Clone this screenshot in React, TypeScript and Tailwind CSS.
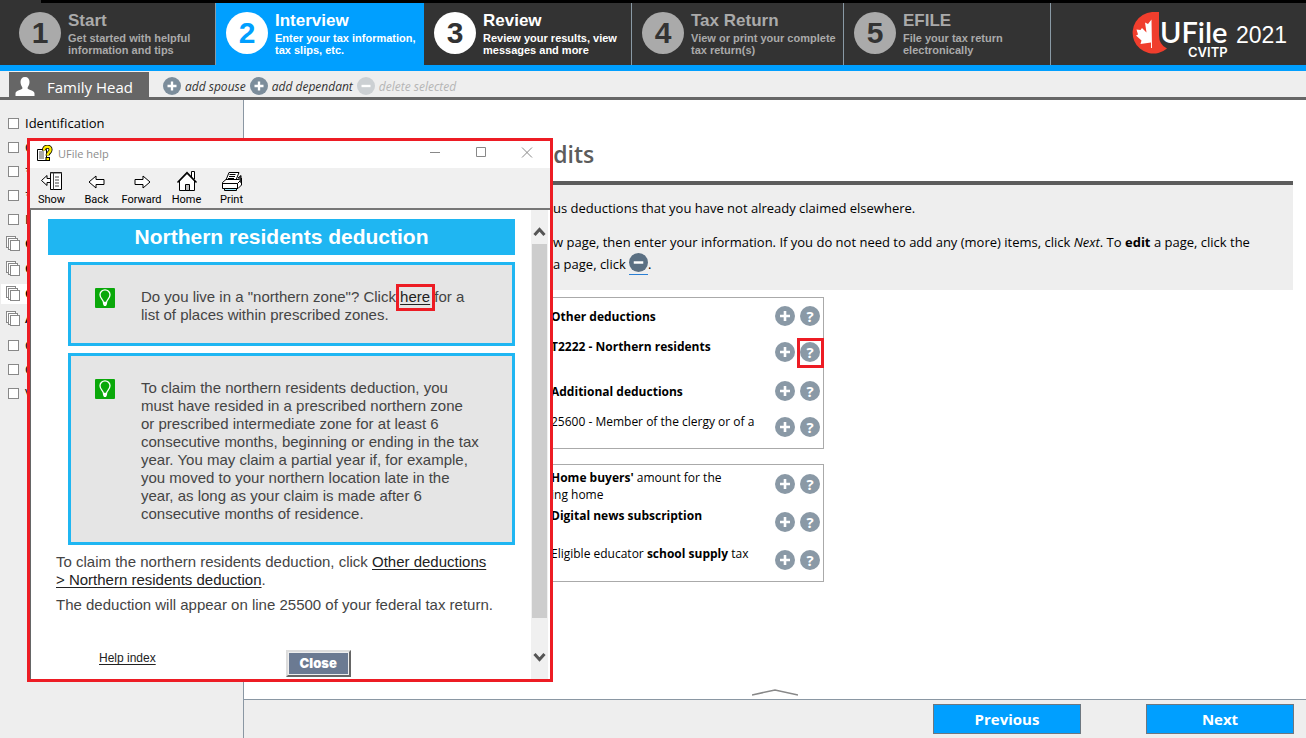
import type { ReactNode } from 'react';

const steps = [
  { n: 1, title: 'Start', lines: ['Get started with helpful', 'information and tips'], box: 'w-[215px] pl-[19px] bg-[#333] text-[#aaa]', circle: 'bg-[#aaa] text-[#333]' },
  { n: 2, title: 'Interview', lines: ['Enter your tax information,', 'tax slips, etc.'], box: 'w-[209px] pl-[10px] bg-[#009fff] text-white border-l border-[#8a9aa5]', circle: 'bg-white text-[#009fff]' },
  { n: 3, title: 'Review', lines: ['Review your results, view', 'messages and more'], box: 'w-[208px] pl-[10px] bg-[#333] text-white border-r border-[#8a9aa5]', circle: 'bg-white text-[#333]' },
  { n: 4, title: 'Tax Return', lines: ['View or print your complete', 'tax return(s)'], box: 'w-[212px] pl-[10px] bg-[#333] text-[#aaa] border-r border-[#8a9aa5]', circle: 'bg-[#aaa] text-[#333]' },
  { n: 5, title: 'EFILE', lines: ['File your tax return', 'electronically'], box: 'w-[207px] pl-[10px] bg-[#333] text-[#aaa] border-r border-[#8a9aa5]', circle: 'bg-[#aaa] text-[#333]' },
];

function Logo() {
  return (
    <svg width="158" height="52" viewBox="0 0 158 52" role="img" aria-label="UFile CVITP 2021">
      <path d="M28 3 H21 A20.800 20.800 0 1 0 36 39.500 Q28 36 28 26 Z" fill="#f03e2d" />
      <path d="M20 39 L20 33.500 L9.500 35 L10.500 31.500 L5 26.500 L7 25.500 L5.500 20.500 L9.500 21 L11 19 L15.500 23.500 L14 13.500 L17 15 L20.500 10.500 L21 39 Z" fill="#fff" />
      <text x="29" y="34" fill="#fff" fontFamily="Lato, sans-serif" fontSize="29" fontWeight="600">UFile</text>
      <text x="57" y="48" fill="#fff" fontFamily="Inter, sans-serif" fontSize="13" fontWeight="600">CVITP</text>
      <text x="105" y="34" fill="#fff" fontFamily="Liberation Sans, sans-serif" fontSize="23" fontWeight="400">2021</text>
    </svg>
  );
}

function Disc({ minus, className }: { minus?: boolean; className: string }) {
  return (
    <svg viewBox="0 0 20 20" className={className} aria-hidden="true">
      <circle cx="10" cy="10" r="10" fill="currentColor" />
      <path d={minus ? 'M5 10H15' : 'M5 10H15M10 5V15'} stroke="#fff" strokeWidth="2.600" />
    </svg>
  );
}

function Stack() {
  return (
    <svg width="15" height="16" viewBox="0 0 15 16" fill="#fff" stroke="#888" shapeRendering="crispEdges" aria-hidden="true">
      <rect x="0.500" y="0.500" width="9" height="11" />
      <rect x="2.500" y="2.500" width="9" height="11" />
      <rect x="4.500" y="4.500" width="9" height="10" />
    </svg>
  );
}

function CheckRow({ id, label }: { id: string; label: string }) {
  return (
    <div className="flex h-6 items-center pl-2">
      <input id={id} type="checkbox" className="size-[11px] appearance-none border border-[#888] bg-white" />
      <label htmlFor={id} className="pl-[6px]">{label}</label>
    </div>
  );
}

function StackRow({ label, active }: { label: string; active?: boolean }) {
  return (
    <div className="flex h-[25px] items-center">
      <button type="button" className={active ? 'ml-px flex h-5 flex-1 items-center gap-1 bg-white pl-[5px]' : 'ml-px flex h-5 flex-1 items-center gap-1 pl-[5px]'}>
        <Stack />
        {label}
      </button>
    </div>
  );
}

function Item({ children, tall, marked, top, name }: { children: ReactNode; tall?: boolean; marked?: boolean; top?: boolean; name: string }) {
  return (
    <div className={tall ? 'flex h-[38px] items-center' : 'flex h-9 items-center'}>
      <div className={top ? 'flex-1 self-start pt-1 pl-[290px]' : 'flex-1 pl-[290px]'}>{children}</div>
      <div className="flex gap-[5px] pr-[3px]">
        <button type="button" aria-label={'Add ' + name} className="size-5 text-[#8a99a6]"><Disc className="size-5" /></button>
        <div className="relative size-5">
          <button type="button" aria-label={'Help on ' + name} className="flex size-5 items-center justify-center rounded-full bg-[#8a99a6] text-[15px] leading-5 font-bold text-white">?</button>
          {marked && <span className="pointer-events-none absolute -top-1 -left-[3px] h-[30px] w-[27px] border-3 border-[#ed1c24]" />}
        </div>
      </div>
    </div>
  );
}

function ToolButton({ label, children }: { label: string; children: ReactNode }) {
  return (
    <button type="button" className="flex w-[45px] flex-col items-center gap-px font-[Roboto,sans-serif] text-[11px] leading-[14px] text-black">
      <svg width="24" height="22" viewBox="0 0 24 22" fill="#fff" stroke="#000" aria-hidden="true">{children}</svg>
      {label}
    </button>
  );
}

function Bulb() {
  return (
    <svg width="20" height="20" viewBox="0 0 20 20" className="shrink-0" aria-hidden="true">
      <rect width="20" height="20" rx="1" fill="#0aa80a" />
      <path d="M8.500 14.500 C8.500 12 5 10.500 5 6.800 A5 5 0 0 1 15 6.800 C15 10.500 11.500 12 11.500 14.500 Z" fill="none" stroke="#fff" strokeWidth="1.300" />
      <path d="M8 14.500h4v1.500l-1 2h-2l-1-2z" fill="#fff" />
    </svg>
  );
}

function HelpWindow() {
  return (
    <section role="dialog" aria-label="UFile help" className="absolute top-[138px] left-[27px] flex h-[544px] w-[526px] flex-col border-3 border-[#ed1c24] bg-white font-['Liberation_Sans',sans-serif] text-[#444]">
      <div className="flex h-[27px] shrink-0 items-center pb-[3px] pl-[7px] font-['Open_Sans',sans-serif] text-[11px] text-[#8c8c8c]">
        <svg width="16" height="17" viewBox="0 0 16 17" aria-hidden="true">
          <path d="M.5 4.500h9v11h-9z" fill="#fff" stroke="#000" />
          <path d="M2 7h5M2 9h5M2 11h5M2 13h5" stroke="#555" />
          <path d="M7 5.500C6.500.5 14 .5 13.500 5C13.500 7.500 10.500 7.500 10.500 10.500" fill="none" stroke="#000" strokeWidth="4" />
          <path d="M7 5.500C6.500.5 14 .5 13.500 5C13.500 7.500 10.500 7.500 10.500 10.500" fill="none" stroke="#ffee00" strokeWidth="2.400" />
          <rect x="9" y="12.500" width="3.500" height="3" fill="#ffee00" stroke="#000" />
        </svg>
        <span className="flex-1 pl-[5px]">UFile help</span>
        <div className="flex gap-[34px] pr-[17px]">
          <button type="button" aria-label="Minimize"><svg width="12" height="12" viewBox="0 0 12 12" stroke="#888"><path d="M1 5.500H11" /></svg></button>
          <button type="button" aria-label="Maximize"><svg width="12" height="12" viewBox="0 0 12 12" fill="none" stroke="#888"><path d="M1.500 .5h9v9h-9z" /></svg></button>
          <button type="button" aria-label="Close window"><svg width="12" height="12" viewBox="0 0 12 12" stroke="#888"><path d="M1 .5L11 10.500M11 .5L1 10.500" /></svg></button>
        </div>
      </div>
      <div className="flex h-[42px] shrink-0 items-start border-b-2 border-[#777] bg-[#f0f0f0] pt-[2px]">
        <div className="-ml-px flex">
          <ToolButton label="Show">
            <path d="M1.500 10.500L7 5.500V8.500H11V12.500H7V15.500Z" />
            <path d="M10.500 2.500h11v17h-11z" />
            <path d="M13.500 2.500v17M15 7h4M15 10h4M15 13h4M15 16h4M10 3h12" stroke="#444" />
          </ToolButton>
          <ToolButton label="Back"><path d="M4 12L11 6V9.500H19V14.500H11V18Z" /></ToolButton>
          <ToolButton label="Forward"><path d="M20 12L13 6V9.500H5V14.500H13V18Z" /></ToolButton>
          <ToolButton label="Home">
            <path d="M16.500 7V1.500h3V9" />
            <path d="M4.500 11V20.500h15V11L12 3.500Z" />
            <path d="M2.500 12.500L12 2.500L21.500 12.500" fill="none" strokeWidth="1.500" />
            <path d="M10.500 20.500v-6h4v6z" fill="#bbb" />
          </ToolButton>
          <ToolButton label="Print">
            <path d="M6 10L9 2.500H19L16 10Z" />
            <path d="M9.500 4.500h6M9 6.500h6M8 8.500h6" />
            <path d="M2.500 12.500L6 9.500H20L21.500 8V15L18 18.500H2.500Z" />
            <path d="M2.500 13.500H17.500V18.500M17.500 13.500L21 10" fill="none" />
            <path d="M4.500 18.500h12v2h-12z" fill="#aef" />
            <path d="M18 8L21 5.500V13" fill="#555" />
          </ToolButton>
        </div>
      </div>
      <div className="flex min-h-0 flex-1 border-l border-[#666]">
        <div className="flex-1 pt-[9px] pr-4 pl-[17px] text-[15px] leading-[18px]">
          <h2 className="flex h-9 items-center justify-center bg-[#1fb6f2] text-[21px] leading-6 font-bold text-white">Northern residents deduction</h2>
          <div className="mt-[7px] ml-5 flex h-[84px] gap-[26px] border-3 border-[#1fb6f2] bg-[#e5e5e5] pt-[23px] pl-6">
            <Bulb />
            <p className="whitespace-nowrap">
              Do you live in a "northern zone"? Click <a href="#zones" className="relative text-[#222] underline underline-offset-2">here<span className="pointer-events-none absolute -top-1 -left-1 h-[27px] w-[39px] border-3 border-[#ed1c24]" /></a> for a<br />
              list of places within prescribed zones.
            </p>
          </div>
          <div className="mt-[7px] ml-5 flex h-[192px] gap-[26px] border-3 border-[#1fb6f2] bg-[#e5e5e5] pt-[23px] pl-6">
            <Bulb />
            <p className="whitespace-nowrap">
              To claim the northern residents deduction, you<br />
              must have resided in a prescribed northern zone<br />
              or prescribed intermediate zone for at least 6<br />
              consecutive months, beginning or ending in the tax<br />
              year. You may claim a partial year if, for example,<br />
              you moved to your northern location late in the<br />
              year, as long as your claim is made after 6<br />
              consecutive months of residence.
            </p>
          </div>
          <div className="mt-2 space-y-[7px] pl-2">
            <p>To claim the northern residents deduction, click <a href="#other" className="text-[#222] underline underline-offset-2">Other deductions<br />&gt; Northern residents deduction</a>.</p>
            <p>The deduction will appear on line 25500 of your federal tax return.</p>
          </div>
          <div className="mt-[36px] flex items-start gap-[130px] pl-[51px]">
            <a href="#index" className="text-xs leading-4 text-[#222] underline underline-offset-2">Help index</a>
            <button type="button" className="h-[27px] w-[65px] border-2 border-t-[#ddd] border-r-[#666] border-b-[#666] border-l-[#ddd] bg-[#eee] p-px">
              <span className="block bg-[#6b7a92] font-[Inter,sans-serif] text-[13px] leading-[21px] font-black text-white">Close</span>
            </button>
          </div>
        </div>
        <div className="mr-[2px] flex w-[17px] flex-col items-center bg-[#f0f0f0]" aria-hidden="true">
          <svg width="17" height="34" viewBox="0 0 17 34"><path d="M3.500 25L8.500 19.500L13.500 25" fill="none" stroke="#555" strokeWidth="3" /></svg>
          <div className="h-[374px] w-[15px] bg-[#cdcdcd]" />
          <svg width="17" height="58" viewBox="0 0 17 58"><path d="M3.500 36L8.500 41.500L13.500 36" fill="none" stroke="#555" strokeWidth="3" /></svg>
        </div>
      </div>
    </section>
  );
}

export default function App() {
  return (
    <div className="relative flex min-h-screen flex-col bg-white font-['Open_Sans',sans-serif] text-[13px] leading-[17px] text-black">
      <header className="border-b-6 border-[#009fff] bg-[#333]">
        <div className="h-[3px] bg-black"><div className="h-full w-[41px] bg-[#333]" /></div>
        <nav className="flex h-[62px] font-['Liberation_Sans',sans-serif] font-bold">
          {steps.map((s) => (
            <button key={s.n} type="button" className={'flex shrink-0 items-start gap-[7px] pt-[9px] text-left ' + s.box}>
              <span className={'flex size-[42px] shrink-0 items-center justify-center rounded-full text-[30px] leading-[42px] ' + s.circle}>{s.n}</span>
              <span className="whitespace-nowrap">
                <span className="block pb-[2px] text-[17px] leading-[18px]">{s.title}</span>
                {s.lines.map((l) => <span key={l} className="block text-[11px] leading-3">{l}</span>)}
              </span>
            </button>
          ))}
          <div className="flex flex-1 justify-end pt-[6px] pr-[17px]"><Logo /></div>
        </nav>
      </header>

      <div className="flex h-[29px] items-end border-b-3 border-[#666] bg-[#eee] pl-[9px]">
        <button type="button" className="flex h-[25px] w-[140px] items-center gap-3 bg-[#666] pl-[6px] text-[15px] text-white">
          <svg width="20" height="20" viewBox="0 0 20 20" fill="#fff" className="mt-1" aria-hidden="true">
            <path d="M10 0C13 0 14.500 2 14.500 5C14.500 8 13 9 12.500 11C12.500 13 19.500 13 19.500 16.500V19H.5V16.500C.5 13 7.500 13 7.500 11C7 9 5.500 8 5.500 5C5.500 2 7 0 10 0Z" />
          </svg>
          <span className="pt-[5px]">Family Head</span>
        </button>
        <div className="flex h-[22px] items-center gap-1 pl-[14px] text-[12px] text-[#333] italic">
          <button type="button" className="flex items-center gap-1"><Disc className="size-[18px] text-[#7c8d9b]" />add spouse</button>
          <button type="button" className="flex items-center gap-1"><Disc className="size-[18px] text-[#7c8d9b]" />add dependant</button>
          <button type="button" disabled className="flex items-center gap-1 text-[#b5b5b5]"><Disc minus className="size-[18px] text-[#ccd0d3]" />delete selected</button>
        </div>
      </div>

      <div className="flex flex-1">
        <aside className="w-[244px] shrink-0 border-r border-[#8a97a3] bg-[#eee] pt-[11px]">
          <CheckRow id="identification" label="Identification" />
          <CheckRow id="c1" label="C" />
          <CheckRow id="c2" label="*" />
          <CheckRow id="c3" label="*" />
          <CheckRow id="c4" label="I" />
          <div className="pb-[2px] font-semibold">
            <StackRow label="C" />
            <StackRow label="C" />
            <StackRow label="C" active />
            <StackRow label="A" />
          </div>
          <CheckRow id="c5" label="C" />
          <CheckRow id="c6" label="C" />
          <CheckRow id="c7" label="V" />
        </aside>

        <div className="flex min-w-0 flex-1 flex-col">
          <main className="flex-1 pr-[13px] pl-4">
            <h1 className="border-b-4 border-[#5c5c5c] pt-[38px] pb-[11px] pl-[280px] text-[23px] leading-8 font-semibold text-[#5c5c5c]">edits</h1>
            <div className="h-[105px] bg-[#eee] pt-[12px] pl-[293px] leading-[22px]">
              <p>us deductions that you have not already claimed elsewhere.</p>
              <p className="pt-3">w page, then enter your information. If you do not need to add any (more) items, click <i>Next</i>. To <b>edit</b> a page, click the</p>
              <p>a page, click <a href="#remove" aria-label="Remove page" className="inline-block h-[22px] border-b border-[#2a7fd4] align-bottom"><Disc minus className="size-[19px] text-[#5b7083]" /></a>.</p>
            </div>
            <div className="mt-[7px] w-[564px] border border-[#aaa] pb-[3px] text-xs leading-[17px]">
              <Item name="other deductions"><b>Other deductions</b></Item>
              <Item name="northern residents" top marked><b>T2222 - Northern residents</b></Item>
              <div className="pt-[3px]">
                <Item name="additional deductions"><b>Additional deductions</b></Item>
                <Item name="clergy" top>25600 - Member of the clergy or of a</Item>
              </div>
            </div>
            <div className="mt-[15px] w-[564px] border border-[#aaa] pb-[2px] text-xs leading-[17px]">
              <Item name="home buyers" tall top><b>Home buyers'</b> amount for the<br />ing home</Item>
              <Item name="digital news" tall top><b>Digital news subscription</b></Item>
              <Item name="school supply" tall top>Eligible educator <b>school supply</b> tax</Item>
            </div>
          </main>
          <div className="flex justify-center pb-[3px]">
            <button type="button" aria-label="Expand panel"><svg width="46" height="7" viewBox="0 0 46 7" fill="none" stroke="#888" strokeWidth="1.500"><path d="M0 6L23 1L46 6" /></svg></button>
          </div>
          <footer className="flex h-[39px] items-start justify-end gap-[65px] border-t border-[#8a97a3] bg-[#eee] pt-1 pr-3">
            <button type="button" className="h-[30px] w-[148px] border border-[#6d7780] bg-[#009fff] pt-px text-[15px] font-bold text-white">Previous</button>
            <button type="button" className="h-[30px] w-[148px] border border-[#6d7780] bg-[#009fff] pt-px text-[15px] font-bold text-white">Next</button>
          </footer>
        </div>
      </div>
      <HelpWindow />
    </div>
  );
}
